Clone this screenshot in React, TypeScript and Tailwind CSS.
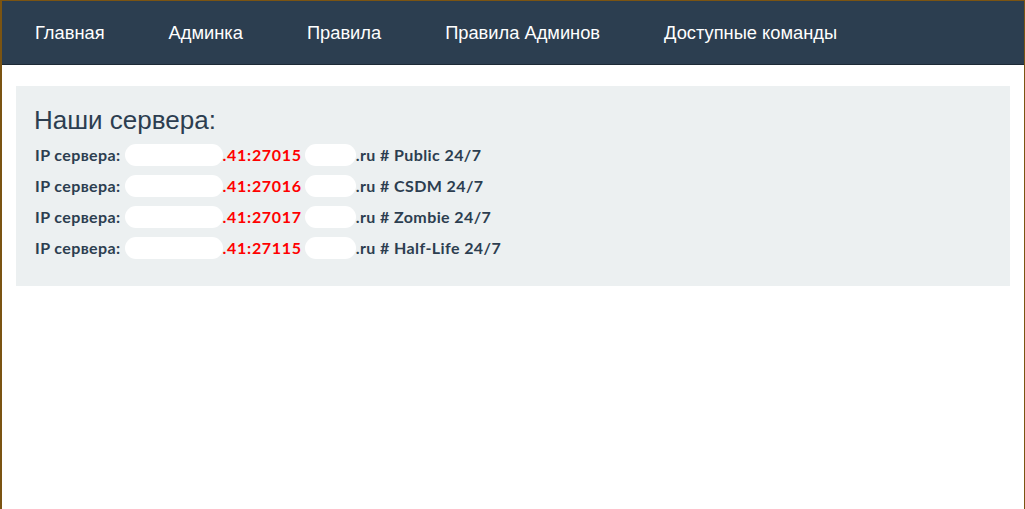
const servers = [
  { port: "27015", name: "Public 24/7" },
  { port: "27016", name: "CSDM 24/7" },
  { port: "27017", name: "Zombie 24/7" },
  { port: "27115", name: "Half-Life 24/7" },
];

const navItems = ["Главная", "Админка", "Правила", "Правила Админов", "Доступные команды"];

export default function App() {
  return (
    <div className="h-[509px] overflow-hidden border-x border-t border-[#7b5412] border-l-2 bg-white">
      <nav className="flex h-[64px] items-center border-b border-[#1d2a36] bg-[#2c3e50] pl-px">
        {navItems.map((item) => (
          <a
            key={item}
            href="#"
            className="px-8 font-['Liberation_Sans',Arial,sans-serif] text-[18.3px] text-white"
          >
            {item}
          </a>
        ))}
      </nav>

      <div className="mx-[14px] mt-[21px] bg-[#ecf0f1] px-[18px] pt-[20px] pb-[23px]">
        <h3 className="font-['Liberation_Sans',Arial,sans-serif] text-[26px] leading-[28px] text-[#2c3e50]">
          Наши сервера:
        </h3>
        <div className="mt-[5px] ml-px">
          {servers.map((s) => (
            <div
              key={s.port}
              className="flex h-[31px] items-center font-['Lato',sans-serif] text-[16px] font-bold tracking-[0.4px] text-[#2c3e50]"
            >
              <span>IP сервера:</span>
              <span className="ml-[4px] h-[22px] w-[98px] rounded-full bg-white" />
              <span className="tracking-[0.7px] text-[#ff0000]">.41:{s.port}</span>
              <span className="ml-[3px] h-[22px] w-[51px] rounded-full bg-white" />
              <span>.ru # {s.name}</span>
            </div>
          ))}
        </div>
      </div>
    </div>
  );
}
